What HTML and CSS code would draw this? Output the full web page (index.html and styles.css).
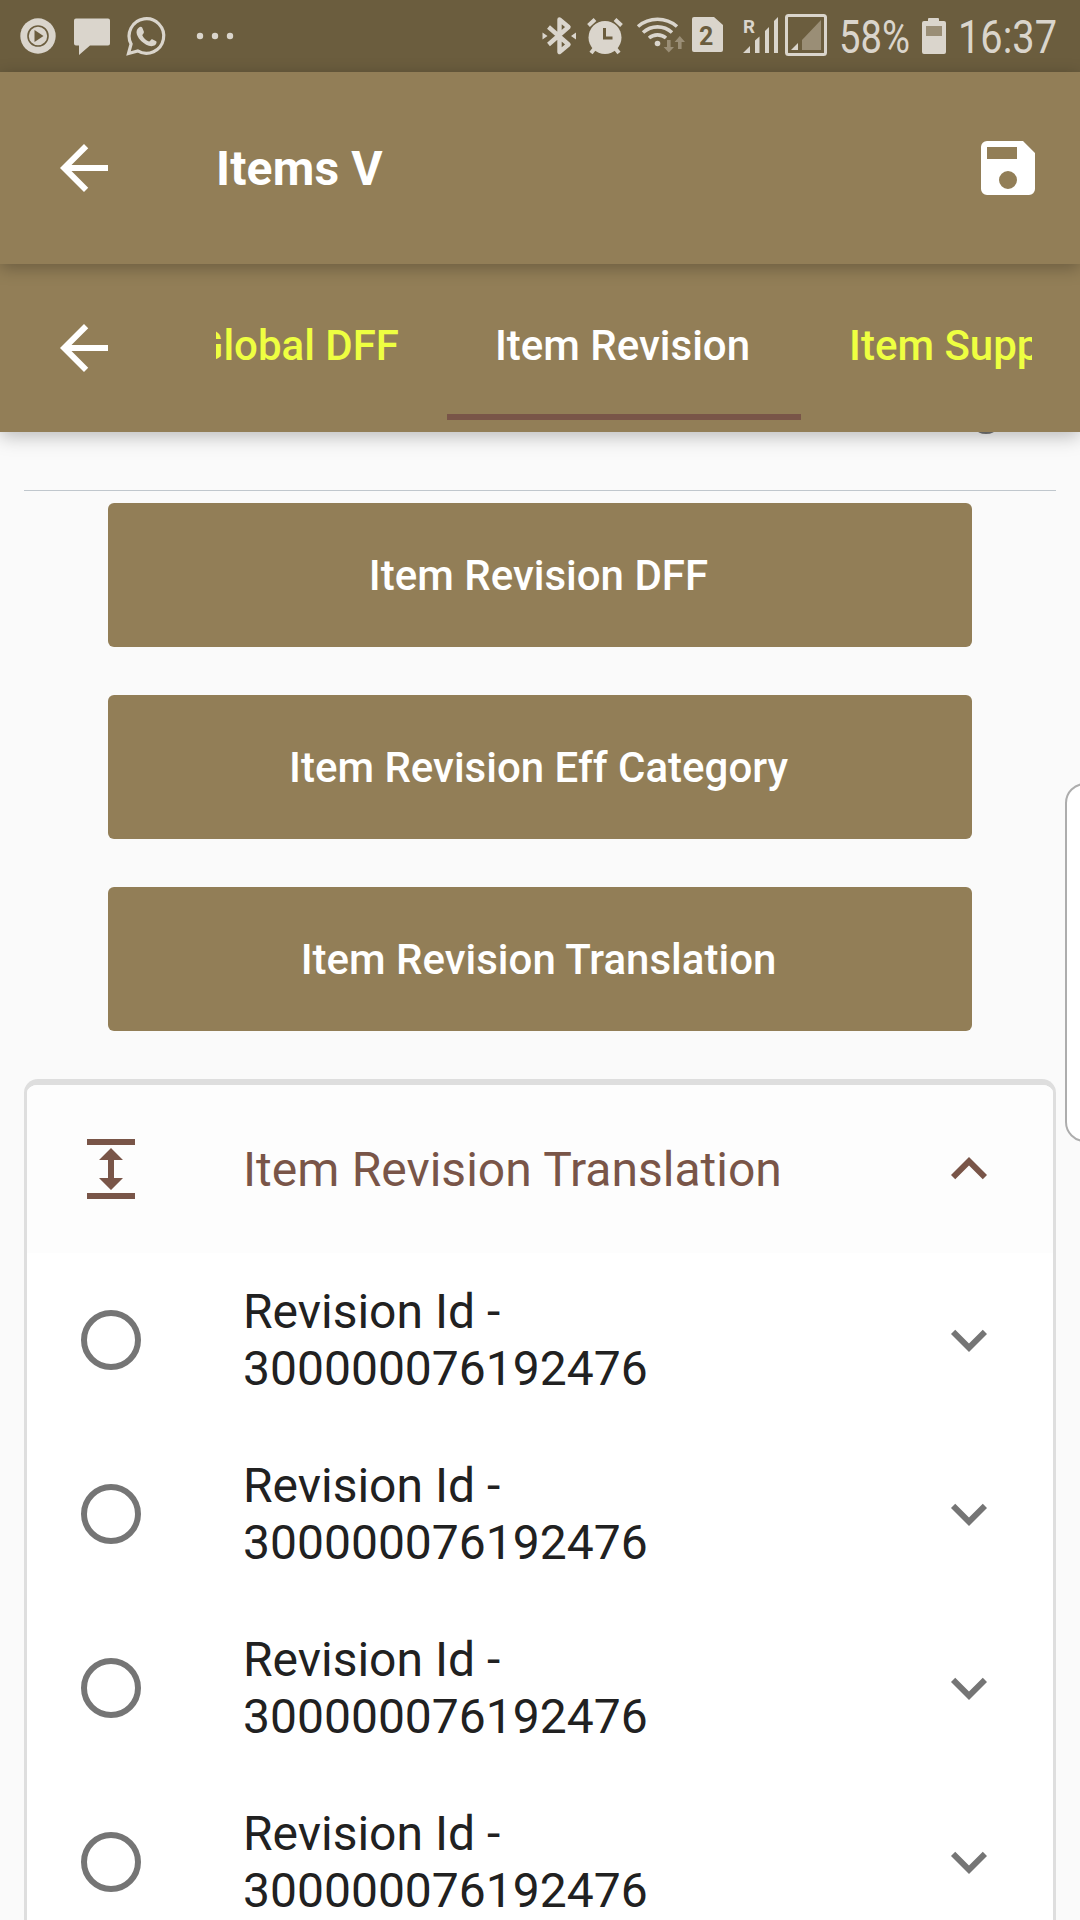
FILE: index.html
```html
<!DOCTYPE html>
<html lang="en">
<head>
<meta charset="utf-8">
<title>Items V</title>
<link rel="stylesheet" href="styles.css">
</head>
<body>
<div class="screen">
  <header class="status">
    <svg width="250" height="72" viewBox="0 0 250 72" fill="#dad5cc">
      <circle cx="38" cy="36" r="17.7"/>
      <circle cx="38" cy="36" r="10" fill="none" stroke="#6b5d3e" stroke-width="1.6"/>
      <path d="M34.5 30v12l9-6z" fill="#6b5d3e"/>
      <path d="M76 18.500h32a2 2 0 0 1 2 2v23a2 2 0 0 1-2 2H90l-11 9.500v-9.500h-3a2 2 0 0 1-2-2v-23a2 2 0 0 1 2-2z"/>
      <path d="M128.500 53.500l2.600-9.500a17.300 17.300 0 1 1 6.600 6.900z" fill="none" stroke="#dad5cc" stroke-width="3.200"/>
      <path d="M139 27.500c1-1 2.800-.8 3.300.3l1.600 4c.4 1.200-1.500 2.700-1.600 3.500 1.200 2.900 3.600 5 6.700 6.200 1 0 2.100-2.700 3.200-2.300l4 2c.8.5.2 2.600-.8 3.500-4 3.400-10 .2-14-3.500-3.500-3.500-7.600-9.800-2.400-13.700z"/>
      <circle cx="200" cy="36" r="3.200"/><circle cx="215" cy="36" r="3.200"/><circle cx="230" cy="36" r="3.200"/>
    </svg>
    <svg width="540" height="72" viewBox="540 0 540 72" fill="#dad5cc">
      <path d="M548.500 27l20 17.500-9 7.500V19.500l9 7.500-20 17.500" fill="none" stroke="#dad5cc" stroke-width="4.400" stroke-linejoin="round"/>
      <path d="M542.500 32.500l5 3.500-5 3.500zM576 32.500l-5 3.500 5 3.500z"/>
      <circle cx="605" cy="37.500" r="16.500"/>
      <path d="M588.500 25.500l6.500-6M621.500 25.500l-6.500-6M595 48l-4 5M615 48l4 5" stroke="#dad5cc" stroke-width="4"/>
      <path d="M604.500 28v10h8" fill="none" stroke="#6b5d3e" stroke-width="3"/>
      <g fill="none" stroke="#dad5cc" stroke-width="3.600">
        <path d="M638 26.500a30 30 0 0 1 39 0M643 32.500a21.500 21.500 0 0 1 29 0M649 38a13 13 0 0 1 17 0"/>
      </g>
      <circle cx="657.500" cy="43.500" r="2.800"/>
      <path d="M667 40h3.600v7h3.400l-5.200 5.500-5.200-5.500h3.400zM678 49h3.600v-7h3.400l-5.200-6-5.200 6h3.400z" fill="#9a8e76"/>
      <path d="M694 17h20l9 8v25a2 2 0 0 1-2 2h-27a2 2 0 0 1-2-2V19a2 2 0 0 1 2-2z"/>
      <text x="699" y="45" class="sim">2</text>
      <text x="743" y="32.500" class="roam" textLength="12" lengthAdjust="spacingAndGlyphs">R</text>
      <path d="M743 53l7-7v7zM755 53V40.500l4.500-4v16.500zM765 53V31l4-4v26zM774 53V21l4-4v36z"/>
      <rect x="786.500" y="15.500" width="39" height="39" rx="2" fill="none" stroke="#dad5cc" stroke-width="3"/>
      <path d="M791 50l7-7v7z"/><path d="M802 50V40l19-20v30z" fill="#9a8e76"/>
      <text x="839" y="53" class="clock" textLength="71" lengthAdjust="spacingAndGlyphs">58%</text>
      <path d="M928 21v-2q0-1 1-1h9q1 0 1 1v2h5q2 0 2 2v29q0 2-2 2h-20q-2 0-2-2V23q0-2 2-2z"/>
      <path d="M926 26h16v10h-16z" fill="#9a8e76"/>
      <text x="958" y="53" class="clock" textLength="99" lengthAdjust="spacingAndGlyphs">16:37</text>
    </svg>
  </header>

  <div class="appbar">
    <svg class="icon" viewBox="0 0 24 24"><path d="M20 11H7.830l5.590-5.590L12 4l-8 8 8 8 1.410-1.410L7.830 13H20v-2z"/></svg>
    <h1 class="title">Items V</h1>
    <svg class="icon" viewBox="0 0 24 24"><path fill-rule="evenodd" d="M17 3H5a2 2 0 0 0-2 2v14a2 2 0 0 0 2 2h14a2 2 0 0 0 2-2V7zM12 19a3 3 0 1 1 0-6 3 3 0 0 1 0 6zM15 9H5V5h10z"/></svg>
  </div>

  <nav class="tabbar">
    <svg class="icon" viewBox="0 0 24 24"><path d="M20 11H7.830l5.590-5.590L12 4l-8 8 8 8 1.410-1.410L7.830 13H20v-2z"/></svg>
    <div class="tabs">
      <span class="tab tab-before">Global DFF</span>
      <span class="tab tab-active">Item Revision</span>
      <span class="tab tab-after">Item Supplier</span>
    </div>
  </nav>

  <main class="content">
    <i class="scrolled-text"></i>
    <hr class="rule">
    <div class="actions">
      <button class="action">Item Revision DFF</button>
      <button class="action">Item Revision Eff Category</button>
      <button class="action">Item Revision Translation</button>
    </div>
    <section class="card">
      <div class="row head">
        <svg class="lead" viewBox="0 0 24 24"><path d="M4 2h16v2H4zM4 20h16v2H4zM12 5l4 4h-3v6h3l-4 4-4-4h3V9H8z"/></svg>
        <span class="label">Item Revision Translation</span>
        <svg class="chev" viewBox="0 0 24 24"><path d="M12 8l-6 6 1.410 1.410L12 10.830l4.590 4.580L18 14z"/></svg>
      </div>
      <div class="row">
        <svg class="lead" viewBox="0 0 24 24"><circle class="ring" cx="12" cy="12" r="9"/></svg>
        <span class="label">Revision Id -<br>300000076192476</span>
        <svg class="chev" viewBox="0 0 24 24"><path d="M16.590 8.590L12 13.170 7.410 8.590 6 10l6 6 6-6z"/></svg>
      </div>
      <div class="row">
        <svg class="lead" viewBox="0 0 24 24"><circle class="ring" cx="12" cy="12" r="9"/></svg>
        <span class="label">Revision Id -<br>300000076192476</span>
        <svg class="chev" viewBox="0 0 24 24"><path d="M16.590 8.590L12 13.170 7.410 8.590 6 10l6 6 6-6z"/></svg>
      </div>
      <div class="row">
        <svg class="lead" viewBox="0 0 24 24"><circle class="ring" cx="12" cy="12" r="9"/></svg>
        <span class="label">Revision Id -<br>300000076192476</span>
        <svg class="chev" viewBox="0 0 24 24"><path d="M16.590 8.590L12 13.170 7.410 8.590 6 10l6 6 6-6z"/></svg>
      </div>
      <div class="row">
        <svg class="lead" viewBox="0 0 24 24"><circle class="ring" cx="12" cy="12" r="9"/></svg>
        <span class="label">Revision Id -<br>300000076192476</span>
        <svg class="chev" viewBox="0 0 24 24"><path d="M16.590 8.590L12 13.170 7.410 8.590 6 10l6 6 6-6z"/></svg>
      </div>
    </section>
  </main>
  <aside class="edge-handle"></aside>
</div>
</body>
</html>
```

FILE: styles.css
```css
* { box-sizing: border-box; }
body { margin: 0; }
.screen {
  position: relative;
  width: 1080px;
  height: 1920px;
  overflow: hidden;
  display: flex;
  flex-direction: column;
  background: #fafafa;
  font-family: Roboto, sans-serif;
}
svg { display: block; flex: none; }

.status { display: flex; justify-content: space-between; height: 72px; flex: none; background: #6b5d3e; }
.clock { font-size: 46px; }
.sim { font-size: 25px; font-weight: 700; fill: #6b5d3e; }
.roam { font-size: 18px; font-weight: 700; }

.appbar, .tabbar {
  display: flex;
  align-items: center;
  flex: none;
  padding: 0 36px 0 48px;
  background: #927e57;
  color: #fff;
}
.appbar { position: relative; z-index: 3; height: 192px; box-shadow: 0 4px 16px rgba(0, 0, 0, .27); }
.tabbar { position: relative; z-index: 2; height: 168px; padding-right: 48px; box-shadow: 0 4px 18px rgba(0, 0, 0, .27); }
.icon { width: 72px; height: 72px; fill: #fff; }
.title { flex: 1; margin: 0 0 0 96px; padding-top: 2px; font-size: 48px; font-weight: 700; line-height: 56px; letter-spacing: .15px; }

.tabs { display: flex; flex: 1; height: 168px; margin-left: 96px; overflow: hidden; }
.tab {
  flex: none;
  height: 156px;
  padding-top: 13px;
  font-size: 42px;
  font-weight: 500;
  line-height: 138px;
  white-space: nowrap;
  color: #eeff41;
}
.tab-before { display: flex; justify-content: flex-end; width: 231px; padding-right: 48px; }
.tab-active { width: 354px; padding-right: 3px; text-align: center; color: #fff; border-bottom: 6px solid #795548; }
.tab-after { padding-left: 48px; }

.content { position: relative; padding: 0 24px; }
.scrolled-text { position: absolute; top: -9px; left: 976px; width: 20px; height: 11px; border-radius: 50%; background: #757575; }
.rule { height: 1px; margin: 58px 0 12px; border: 0; background: #c0c7cd; }
.actions { display: flex; flex-direction: column; gap: 48px; padding: 0 84px; }
.action {
  height: 144px;
  padding: 2px 3px 0 0;
  border: 0;
  border-radius: 6px;
  background: #927e57;
  color: #fff;
  font: 500 42px/50px Roboto, sans-serif;
}

.card {
  margin-top: 48px;
  height: 900px;
  border: 3px solid #dedede;
  border-top-width: 6px;
  border-bottom: 0;
  border-radius: 14px 14px 0 0;
  background: #fff;
  overflow: hidden;
}
.row { display: flex; align-items: center; height: 174px; padding: 0 48px; color: #212121; }
.label { flex: 1; margin-left: 96px; font-size: 48px; line-height: 57px; }
.lead { width: 72px; height: 72px; fill: currentColor; }
.chev { width: 72px; height: 72px; fill: #757575; }
.ring { fill: none; stroke: #757575; stroke-width: 2; }
.head { height: 168px; background: #fdfdfd; color: #795548; word-spacing: .5px; }
.head .chev { fill: #795548; }

.edge-handle {
  position: absolute;
  top: 783px;
  left: 1065px;
  width: 40px;
  height: 359px;
  border: 2px solid #adadad;
  border-radius: 20px;
  background: #fff;
}
```
